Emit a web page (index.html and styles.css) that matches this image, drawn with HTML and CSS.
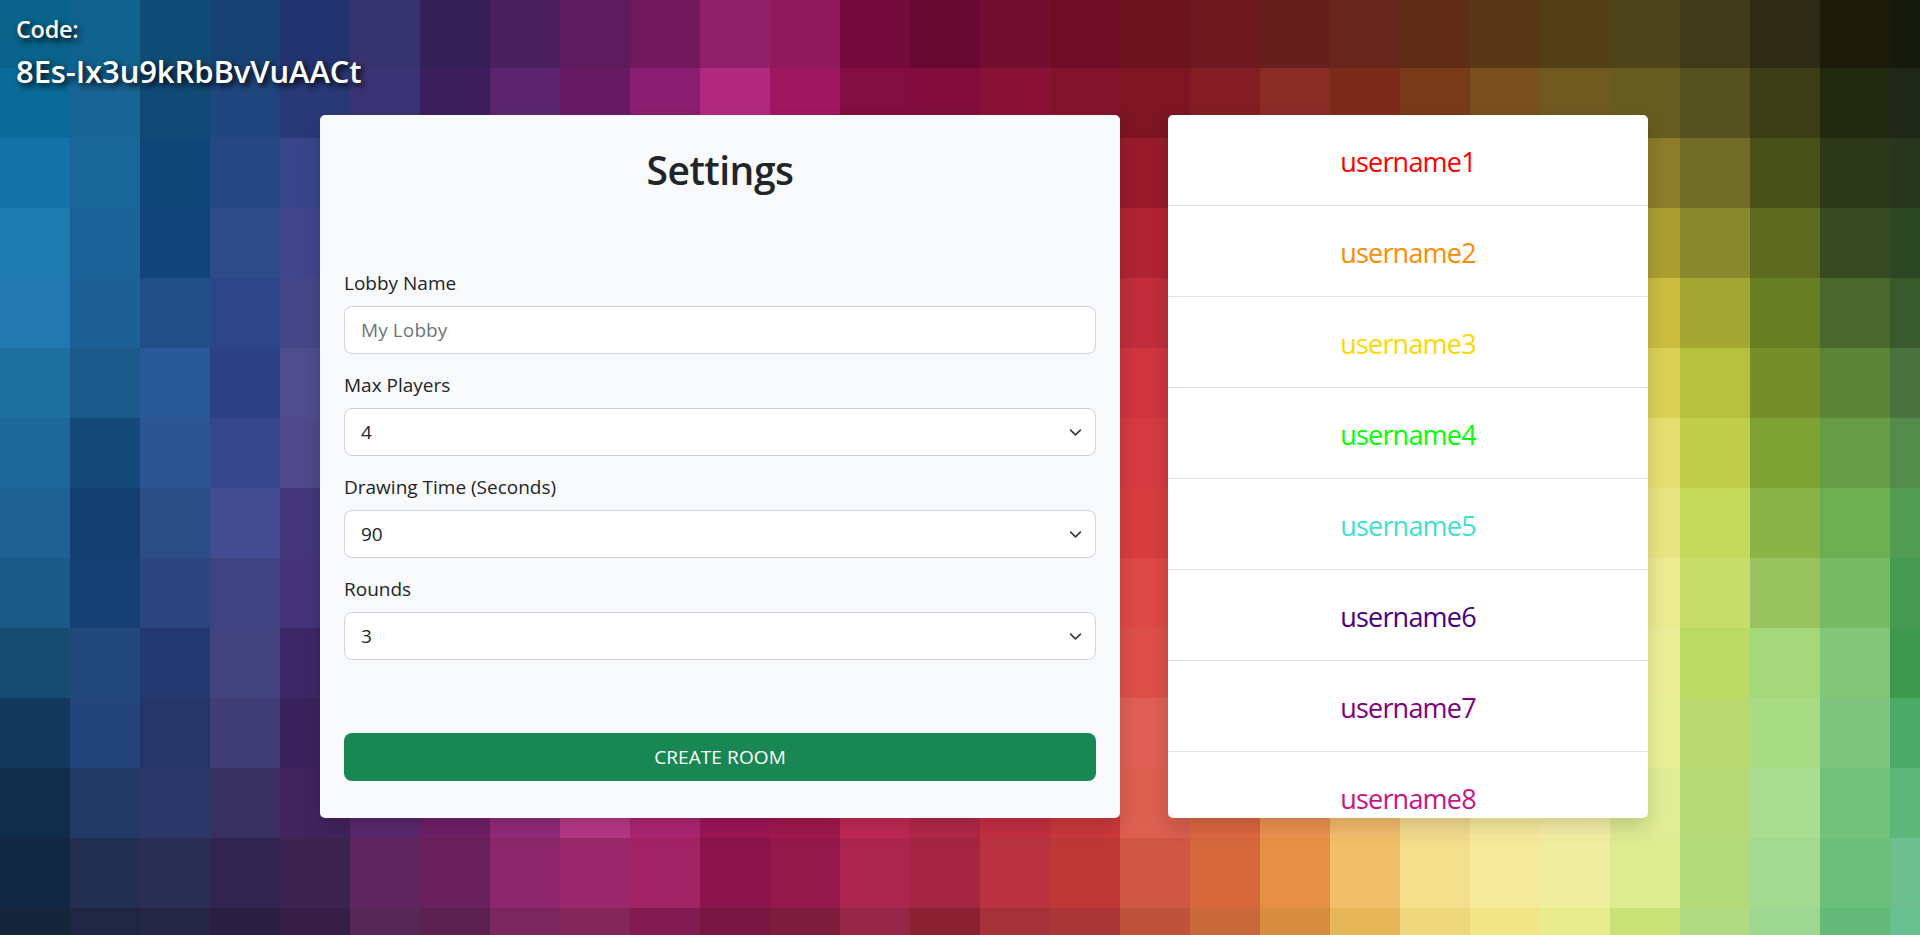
FILE: index.html
```html
<!DOCTYPE html>
<html lang="en">
<head>
<meta charset="utf-8">
<title>Create Room</title>
<link rel="stylesheet" href="styles.css">
</head>
<body>
<div class="mosaic" id="mosaic"></div>
<div class="page">
  <header class="code">
    <h5 class="code-label">Code:</h5>
    <h3 class="code-value">8Es-Ix3u9kRbBvVuAACt</h3>
  </header>
  <main class="panels">
    <form class="settings">
      <h1 class="title">Settings</h1>
      <div class="fields">
        <div class="field">
          <label class="label">Lobby Name</label>
          <div class="control placeholder">My Lobby</div>
        </div>
        <div class="field">
          <label class="label">Max Players</label>
          <div class="control"><span>4</span><svg class="chevron" viewBox="0 0 16 16"><path d="m2 5 6 6 6-6"/></svg></div>
        </div>
        <div class="field">
          <label class="label">Drawing Time (Seconds)</label>
          <div class="control"><span>90</span><svg class="chevron" viewBox="0 0 16 16"><path d="m2 5 6 6 6-6"/></svg></div>
        </div>
        <div class="field">
          <label class="label">Rounds</label>
          <div class="control"><span>3</span><svg class="chevron" viewBox="0 0 16 16"><path d="m2 5 6 6 6-6"/></svg></div>
        </div>
      </div>
      <button class="create" type="button">CREATE ROOM</button>
    </form>
    <ul class="users">
      <li class="user red">username1</li>
      <li class="user orange">username2</li>
      <li class="user gold">username3</li>
      <li class="user lime">username4</li>
      <li class="user turquoise">username5</li>
      <li class="user indigo">username6</li>
      <li class="user purple">username7</li>
      <li class="user violet">username8</li>
    </ul>
  </main>
</div>
<script src="script.js"></script>
</body>
</html>
```
FILE: styles.css
```css
* { box-sizing: border-box; }
body {
  margin: 0;
  height: 935px;
  overflow: hidden;
  position: relative;
  font-family: "Open Sans", "Noto Sans", sans-serif;
  font-size: 19px;
  color: #212529;
}
.mosaic {
  position: absolute;
  inset: 0;
  z-index: -1;
  overflow: hidden;
  display: grid;
  grid-template-columns: repeat(28, 70px);
  grid-template-rows: 68px repeat(13, 70px);
}
.page { height: 100%; display: flex; flex-direction: column; }
.code {
  height: 115px;
  padding: 14px 16px 0;
  color: #fff;
  text-shadow: 3px 3px 6px #000;
}
.code-label, .code-value { margin: 0; font-weight: 600; white-space: nowrap; }
.code-label { font-size: 23.5px; line-height: 30px; letter-spacing: -0.3px; }
.code-value { font-size: 31px; line-height: 40px; margin-top: 7px; letter-spacing: -0.1px; }
.panels { display: flex; gap: 48px; padding-left: 320px; height: 703px; }
.settings, .users {
  border-radius: 5px;
  box-shadow: 0 10px 20px rgba(0, 0, 0, .15);
}
.settings {
  width: 800px;
  padding: 24px;
  background: #f8f9fb;
  display: flex;
  flex-direction: column;
}
.title {
  margin: 7px 0 0;
  text-align: center;
  font-size: 39px;
  line-height: 48px;
  font-weight: 600;
  letter-spacing: -0.5px;
}
.fields { display: flex; flex-direction: column; gap: 16px; margin-top: 74px; }
.field { height: 86px; }
.label { display: block; height: 38px; line-height: 30px; }
.control {
  height: 48px;
  border: 1px solid #ced4da;
  border-radius: 8px;
  background: #fff;
  padding: 0 13px 0 16px;
  display: flex;
  align-items: center;
  justify-content: space-between;
}
.placeholder { color: #6c757d; letter-spacing: 0.1px; }
.chevron {
  width: 13px;
  height: 13px;
  fill: none;
  stroke: #343a40;
  stroke-width: 2;
  stroke-linecap: round;
  stroke-linejoin: round;
}
.create {
  margin-top: 73px;
  height: 48px;
  border: 0;
  border-radius: 8px;
  background: #198754;
  color: #fff;
  font: inherit;
  letter-spacing: 0.1px;
}
.users {
  width: 480px;
  margin: 0;
  padding: 0;
  list-style: none;
  background: #fff;
  overflow: hidden;
}
.user {
  height: 91px;
  border-bottom: 1px solid #dfe0e4;
  text-align: center;
  font-size: 27px;
  line-height: 94px;
  letter-spacing: -0.8px;
}
.red { color: #ff0000; }
.orange { color: #ff8c00; }
.gold { color: #ffd700; }
.lime { color: #00ff00; }
.turquoise { color: #40e0d0; }
.indigo { color: #4b0082; }
.purple { color: #800080; }
.violet { color: #c71585; }
```
FILE: script.js
```js
// Colour rows of the mosaic; the middle rows list only the columns outside the panels.
const full = {
  0: "09638a 11628f 104c76 194274 23336f 36336f 322056 4a205e 5b1b5d 72185c 91206a 90195c 740b3c 670930 720e2f 6f0d28 6d1320 6e1a20 671f1c 68271d 5f2d16 593616 544016 4d441c 403b19 2d2b15 1a1b09 161a0e",
  1: "0a6b9a 186494 124a77 204680 293876 3a3475 3a1f5c 5a256e 651b62 8a1e70 b0297e 9e175f 820d40 820d3b 8a1136 83132d 7d1523 831d23 8a2b26 7c2b1b 783a18 7a4f1e 705a20 675c20 555120 3b3e15 21290f 202819",
  11: "0f2d4a 203a63 2b3768 38305f 41245e 5a286e 712069 952b7a b93888 b02674 9f1658 a4184f c32857 b42749 c62f42 ce393c dd5f50 de6841 ef9350 f5bf6e f7de90 faeea0 f7f1a8 e0ed94 b6d977 a9de91 72c27b 5db77b",
  12: "122741 222f50 2b2f56 302550 3d2350 5e2660 69205c 8b276a 9b286c a32465 8a144b 95194a ad264f a62641 bb3340 bf3836 cf5744 d5673a e69045 f0bf68 f3de8b f6ea9b f0eea0 dcec8f b3d97a a3da8f 6bbf7a 6dbe8e",
  13: "17253a 1e2643 262645 291f42 371e46 562757 5a2050 79265e 83275a 811b50 771640 7d1c3c 972748 8b2234 a6313a aa3635 bd523d c9683a d98d40 e7b859 eed77c f2e587 e7ec8c c9e177 b1db83 9dd691 63ba78 68bf8f"
};
const edges = {
  2: "1574a7 196799 104577 254784 38458a 981b2c 8c7d2b 716c28 495216 2c3817 29361f",
  3: "1d7bae 1a6297 11447b 2c4b87 40458c b12433 ab9e31 898a2f 5d6a1f 384b20 2c4724",
  4: "2179ae 1d6095 204f87 2b4588 454789 c12d3b cabd40 a4a732 687e22 4a682d 385a2d",
  5: "1e70a0 1c5a8b 2a5998 2c4184 504d8f ce353f dbd157 b5c03d 758d2a 5d8338 4a7340",
  6: "1c6999 154978 2b5593 36468a 50498a d43b42 e5de70 bfcf4b 7fa234 669c46 548c4c",
  7: "1d6292 123f70 2c4d84 434c90 44377c d63d3e e9e483 c5da5b 8bb447 6dae52 529d53",
  8: "1a5a86 163f74 2b467f 3f4381 45347a dc4946 ebeb90 c6dd6b 99c35f 76bc64 469a52",
  9: "174b72 22477a 243970 42437e 3d2867 dd5048 ebee97 bcd865 a4d67a 82c779 3e994f",
  10: "133a5d 23457a 253568 403c76 3a235c df5f56 e9ef97 b9d96f a7dc85 7ec47f 4baa66"
};
const mosaic = document.getElementById("mosaic");
for (let r = 0; r < 14; r++) {
  const list = (full[r] || edges[r]).split(" ");
  for (let c = 0; c < 28; c++) {
    let i = c;
    if (!full[r]) i = c < 5 ? c : c < 20 ? 5 : Math.max(6, c - 17);
    const tile = document.createElement("div");
    tile.style.backgroundColor = "#" + list[i];
    mosaic.appendChild(tile);
  }
}
```
